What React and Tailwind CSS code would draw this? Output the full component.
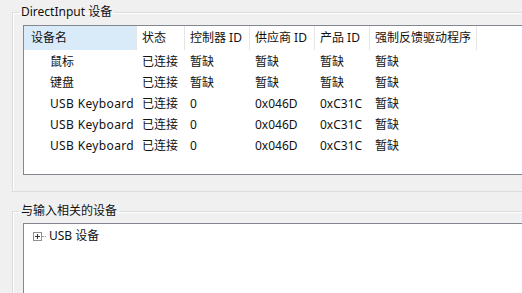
const COLS = [
  { label: '设备名', w: 'w-[113px]', hover: true },
  { label: '状态', w: 'w-[48px]' },
  { label: '控制器 ID', w: 'w-[65px]' },
  { label: '供应商 ID', w: 'w-[65px]' },
  { label: '产品 ID', w: 'w-[55px]' },
  { label: '强制反馈驱动程序', w: 'w-[107px]' },
]

const ROWS = [
  ['鼠标', '已连接', '暂缺', '暂缺', '暂缺', '暂缺'],
  ['键盘', '已连接', '暂缺', '暂缺', '暂缺', '暂缺'],
  ['USB Keyboard', '已连接', '0', '0x046D', '0xC31C', '暂缺'],
  ['USB Keyboard', '已连接', '0', '0x046D', '0xC31C', '暂缺'],
  ['USB Keyboard', '已连接', '0', '0x046D', '0xC31C', '暂缺'],
]

function GroupBox({ title, className, children }) {
  return (
    <fieldset className={`border border-[#dcdcdc] shadow-[inset_1px_1px_0_#fff] pl-[10px] ${className}`}>
      <legend className="-ml-[4px] px-[2px] h-4 leading-4">{title}</legend>
      {children}
    </fieldset>
  )
}

export default function App() {
  return (
    <div
      className="w-[522px] h-[293px] overflow-hidden bg-[#f0f0f0] text-[12px] text-[#111] pt-1 pl-3"
      style={{ fontFamily: '"Noto Sans", "Noto Sans CJK SC", sans-serif' }}
    >
      <GroupBox title="DirectInput 设备" className="w-[540px] pt-[5px] pb-[16px]">
        <div className="h-[150px] border border-[#828790] bg-white">
          <div className="flex h-6">
            {COLS.map((c) => (
              <div
                key={c.label}
                className={`${c.w} flex items-center border-r border-[#e5e5e5] ${c.hover ? 'bg-[#d9ebf9] pl-[7px]' : 'pl-[5px]'}`}
              >
                {c.label}
              </div>
            ))}
          </div>
          <div className="pt-px">
            {ROWS.map((r, i) => (
              <div key={i} className="flex h-[21px] items-center">
                {r.map((v, j) => (
                  <div
                    key={j}
                    className={`${COLS[j].w} whitespace-nowrap ${j === 0 ? 'pl-[26px]' : 'pl-[5px]'} ${v === 'USB Keyboard' ? 'tracking-[0.35px]' : ''}`}
                  >
                    {v}
                  </div>
                ))}
              </div>
            ))}
          </div>
        </div>
      </GroupBox>

      <GroupBox title="与输入相关的设备" className="mt-[11px] w-[540px] h-[120px] pt-1">
        <div className="h-[100px] border border-[#828790] bg-white pt-[2px] pl-[9px]">
          <div className="flex h-5 items-center">
            <svg width="9" height="9" viewBox="0 0 9 9" className="shrink-0">
              <rect x="0.5" y="0.5" width="8" height="8" fill="#fff" stroke="#919191" />
              <path d="M2 4.5h5M4.5 2v5" stroke="#333" />
            </svg>
            <span className="w-[4px] border-t border-dotted border-[#a0a0a0] mr-[3px]" />
            <span>USB 设备</span>
          </div>
        </div>
      </GroupBox>
    </div>
  )
}
